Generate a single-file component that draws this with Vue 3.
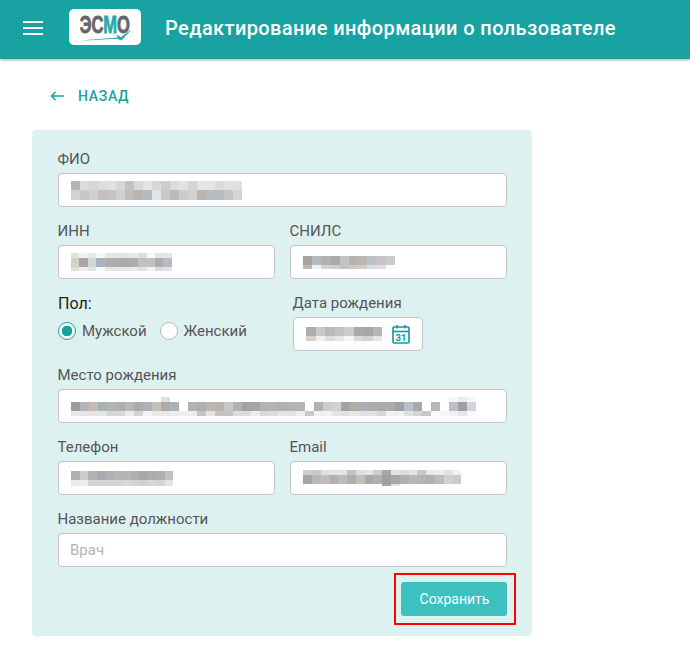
<script setup>
import { h } from 'vue'

// размытые значения полей: строки цветов, w — ширина клетки, h — высоты строк
const blur = {
  fio: {
    w: 9, h: [9, 10],
    rows: [
      'b4b4b6 dcdcdc d6d6d6 e0dcd8 e0e0e6 d8d6d2 c0c2c2 dcd8da e4e4e4 d8d8d8 ccced0 dcdcdc e2e2e2 d4d4d4 e4e4e8 e8e4e2 d8dcdc e0e0de e0e0e4',
      'd2d2d2 c8c8c8 d0d0cc c8c0bc c0c4cc d0d0ce c0bebc b8b4b0 b8bac0 e0e4e8 ccc8c4 b8bcc0 cccccc d0d2d0 bcb4ae b8bcc0 b8bcc0 c4c4c4 d4d4d4'
    ]
  },
  inn: {
    w: 8.4, h: [5, 9, 4],
    rows: [
      'e4e2dc f2f2f4 e8eaea f8f8f8 e6e6e6 e6e6e6 e6e6e6 e8e8e8 dedede f8f8f6 e4e4e4 e6e6e8',
      'd4d0ca aca4ac d4d6d0 aab4c0 b4aeb0 a8acb0 a8aaae acacae c0c0c4 c4c0bc aaacb0 b8bcc2',
      'e0ded8 eeeef0 e2e2e2 f6f8fa e6e6e6 e6e6e6 e6e6e6 eaeaea e0e0e0 f2f2f2 dcdcdc e0e4e8'
    ]
  },
  snils: {
    w: 9.2, h: [9, 4],
    rows: [
      'a8a49c b0bac2 b4b0ae a8acac c4c4c4 b4b4b2 bcb6b0 bcc2ca c8c4c2 c8cad0',
      'bcb8b0 eef0f4 d4d4d4 d0d0d0 c4c4c4 ccc8c2 d0ccc8 dcdce0 e0dede fafafc'
    ]
  },
  date: {
    w: 9.5, h: [9, 5],
    rows: [
      'b0aca8 c8cace bcb8b4 c0c2c6 cccccc acaaa8 a8a6a0 b4b6be',
      'd4d0cc f0f0f0 dcdcdc e8e8ec f4f4f4 dcdad8 d4d2ce e4e4e8'
    ]
  },
  place: {
    w: 9, h: [5, 9, 5],
    rows: [
      '- - - - - - - - - - e0dedc - - - - - - - - - - - - - - - - - - - - - - - - - - - - - - - f6f6f6 eeecea f4f6f8',
      '9c9ca4 b4b4b4 c4bcb4 a8b0b8 b4b4b0 b0b0ae b8b8bc aeaca8 b0b2b8 c8bfb8 acacb0 aab2b8 - b4b2b0 b0aeac b8b8b2 bcb4ac c4cad0 b0b0ae a4a2a2 a8a4a4 b0b4b6 b4b4b8 b0b0b0 b2b4b6 b4b4b4 - b8b0ac c4ced4 d4d0cc a4a4a4 b0aea8 acb0b4 acacac aeaaa6 aeaaa4 a0a0a8 b8c0c8 a8a8a8 - b4b8bc - c0c0c4 a0a0a4 d4d4d8',
      'e8e8e8 e6e6e6 e8e4e2 e4e4e4 d8d8d8 d8d8d8 ececec d4d4d0 f2f4f4 e8e8e8 e8e8e8 ececec eeeeee ececec c4c4c0 e4e4e4 c4c4c0 c4c4c0 dcdcdc dcdcdc ececec d8d8d8 dcdcdc e4e4e4 e4e4e4 eeeeee c8c8c8 eef0f2 f2f2f2 e4e4e4 e2e2e2 e8e8e4 e2e2e2 e2e2e2 d8d8d6 f2f2f4 f0f0f2 e0e0e0 d8d4d0 c4c8cc f8f8fa f4f6f8 f0f2f4 e8e8ec f8f8f8'
    ]
  },
  phone: {
    w: 8.5, h: [9, 6],
    rows: [
      'b0b0b4 ccccc8 b8b0ac a8a8b0 acb0b4 b4b4b4 b8b6b0 b0aeb0 a8a8a8 acacb4 b0aeae c0c0c8',
      'ececec eeeef0 d4d4d4 d4d4d4 d4d4d4 d4d4d4 d8d8d4 d4d4d4 d0d0d0 d8d8dc d4d4d4 e4e4e8'
    ]
  },
  email: {
    w: 8.8, h: [5, 9, 2],
    rows: [
      'd0ccca ccc8c8 dce0e4 e4e4e4 e4e4e4 c4c4c4 e0dedc e4e4e4 d0ccc8 a8a8ac e4e4e8 dcdce0 e4e4e2 c8c8c8 e8e8e8 ececec e4e0dc f2f2f4',
      'a8a4a8 b4b8c0 c0c0b8 b8b0b0 b4bcc4 b0b0aa c0c0b8 a8a8b0 b0b0b4 a0a0a0 a8a8a8 b4b0a8 b4bac4 b4b4b4 b0b0b0 bcbcbc d4d0c8 c4ccd4',
      '- - - - - - - - - a8a8a8 e0e0e0 - - - - - - -'
    ]
  }
}

// мозаика вместо значения поля
const Mosaic = ({ data }) =>
  h('div', null, data.rows.map((row, i) =>
    h('div', { style: { display: 'flex', height: data.h[i] + 'px' } }, row.split(' ').map(c =>
      h('i', { style: { flex: 'none', width: data.w + 'px', background: c === '-' ? 'transparent' : '#' + c } })
    ))
  ))
Mosaic.props = ['data']
</script>

<template>
  <div class="page">
    <header class="topbar">
      <div class="burger"><span></span><span></span><span></span></div>
      <div class="logo">
        <span class="logo-text">ЭС<em>М</em>О</span>
        <svg class="logo-check" width="54" height="14" viewBox="0 0 54 14">
          <path d="M0 12.5 C12 11.5 26 10.5 38 9.5 L36 6.5 L41 9 L52 1 L41.5 12.5 L37 10.8 C25 11.5 12 12.5 0 12.5 Z" fill="#2aa9a9" />
        </svg>
      </div>
      <h1 class="title">Редактирование информации о пользователе</h1>
    </header>

    <main class="content">
      <a class="back">
        <svg width="14" height="10" viewBox="0 0 14 10">
          <path d="M14 5H1.5M5.5 1L1.5 5l4 4" fill="none" stroke="#18a2a2" stroke-width="1.6" />
        </svg>
        <span>Назад</span>
      </a>

      <form class="card" @submit.prevent>
        <div class="field">
          <label>ФИО</label>
          <div class="box"><Mosaic :data="blur.fio" /></div>
        </div>

        <div class="two">
          <div class="field">
            <label>ИНН</label>
            <div class="box"><Mosaic :data="blur.inn" /></div>
          </div>
          <div class="field">
            <label>СНИЛС</label>
            <div class="box"><Mosaic :data="blur.snils" /></div>
          </div>
        </div>

        <div class="two two-date">
          <div class="gender">
            <div class="gender-label">Пол:</div>
            <div class="radios">
              <span class="radio on"></span><span class="radio-text">Мужской</span>
              <span class="radio"></span><span class="radio-text">Женский</span>
            </div>
          </div>
          <div class="field">
            <label>Дата рождения</label>
            <div class="box box-date">
              <Mosaic :data="blur.date" />
              <svg width="18" height="20" viewBox="0 0 18 20">
                <rect x="1" y="3" width="16" height="16" rx="1" fill="none" stroke="#0f9a9a" stroke-width="1.6" />
                <path d="M1 7.5h16" stroke="#0f9a9a" stroke-width="1.6" />
                <path d="M5 1v3.5M13 1v3.5" stroke="#0f9a9a" stroke-width="1.6" />
                <text x="9" y="16.5" text-anchor="middle" class="cal-num">31</text>
              </svg>
            </div>
          </div>
        </div>

        <div class="field">
          <label>Место рождения</label>
          <div class="box"><Mosaic :data="blur.place" /></div>
        </div>

        <div class="two">
          <div class="field">
            <label>Телефон</label>
            <div class="box"><Mosaic :data="blur.phone" /></div>
          </div>
          <div class="field">
            <label>Email</label>
            <div class="box"><Mosaic :data="blur.email" /></div>
          </div>
        </div>

        <div class="field">
          <label>Название должности</label>
          <input class="box input" type="text" placeholder="Врач" />
        </div>

        <div class="actions">
          <button class="save" type="submit">Сохранить</button>
        </div>
      </form>
    </main>
  </div>
</template>

<style>
html, body {
  background: #fff;
}
</style>

<style scoped>
.page {
  font-family: Roboto, "Liberation Sans", sans-serif;
  color: #555;
}

/* шапка */
.topbar {
  height: 59px;
  background: #18a2a2;
  box-shadow: 0 1px 3px rgba(0, 0, 0, 0.35);
  display: flex;
  align-items: center;
  padding-left: 23px;
  padding-bottom: 3px;
  box-sizing: border-box;
}
.burger {
  width: 20px;
  display: flex;
  flex-direction: column;
  gap: 4px;
}
.burger span {
  height: 2px;
  background: #fff;
}
.logo {
  position: relative;
  width: 72px;
  height: 36px;
  margin: -2px 0 0 26px;
  background: #fff;
  border-radius: 5px;
  display: flex;
  justify-content: center;
}
.logo-text {
  font-family: "Liberation Sans", sans-serif;
  font-weight: 700;
  font-size: 23px;
  line-height: 33px;
  color: #66666a;
  -webkit-text-stroke: 0.8px currentColor;
  transform: scaleX(0.72);
}
.logo-text em {
  font-style: normal;
  color: #2aa9a9;
}
.logo-check {
  position: absolute;
  left: 11px;
  top: 19px;
}
.title {
  margin: 0 0 0 24px;
  font-size: 20px;
  font-weight: 500;
  color: #fff;
  letter-spacing: 0.4px;
  white-space: nowrap;
}

.content {
  padding-left: 32px;
}
.back {
  display: flex;
  align-items: center;
  gap: 14px;
  height: 36px;
  margin: 19px 0 16px 18px;
  color: #18a2a2;
  font-size: 14px;
  font-weight: 500;
  letter-spacing: 0.7px;
  text-transform: uppercase;
}

/* форма */
.card {
  width: 500px;
  box-sizing: border-box;
  padding: 19px 25px 20px 26px;
  background: #ddf1f0;
  border-radius: 4px;
  display: flex;
  flex-direction: column;
  gap: 14px;
}
.two {
  display: grid;
  grid-template-columns: 217px 217px;
  gap: 15px;
}
.two-date {
  grid-template-columns: 220px 130px;
}
.field label {
  display: block;
  height: 24px;
  margin-left: -0.5px;
  line-height: 21px;
  font-size: 15px;
  color: #555;
}
.box {
  display: flex;
  align-items: center;
  height: 34px;
  box-sizing: border-box;
  padding-left: 12px;
  background: #fff;
  border: 1px solid #c4c4c4;
  border-radius: 4px;
}
.input {
  width: 100%;
  padding-left: 11px;
  font: inherit;
  font-size: 15px;
  outline: none;
}
.input::placeholder {
  color: #b4b4b4;
  opacity: 1;
}

.gender-label {
  height: 29px;
  line-height: 21px;
  font-size: 16px;
  color: #222;
}
.radios {
  display: flex;
  align-items: center;
}
.radio {
  width: 18px;
  height: 18px;
  box-sizing: border-box;
  background: #fff;
  border: 1px solid #bbb;
  border-radius: 50%;
}
.radio.on {
  border: 1.5px solid #18a2a2;
  background: radial-gradient(circle, #18a2a2 0 5px, #fff 5.5px);
}
.radio-text {
  margin: 0 13px 0 6px;
  font-size: 15px;
}

.box-date {
  justify-content: space-between;
  padding-right: 12px;
}
.cal-num {
  font-family: Roboto, sans-serif;
  font-size: 9.5px;
  font-weight: 700;
  fill: #0f9a9a;
}

.actions {
  display: flex;
  justify-content: flex-end;
  margin-top: 1px;
}
.save {
  position: relative;
  width: 106px;
  height: 34px;
  padding: 0 0 0 1px;
  background: #3cc0c0;
  color: #fff;
  border: 0;
  border-radius: 3px;
  font: inherit;
  font-size: 14px;
}
/* красная рамка-пометка поверх кнопки */
.save::after {
  content: "";
  position: absolute;
  left: -7px;
  top: -9px;
  width: 122px;
  height: 52px;
  box-sizing: border-box;
  border: 2px solid #f00;
}
</style>
